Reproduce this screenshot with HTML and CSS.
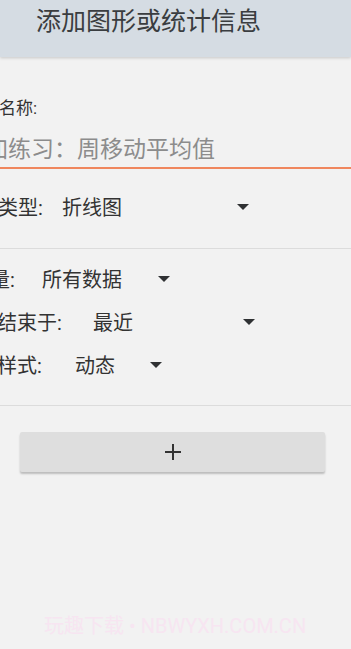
FILE: index.html
```html
<!DOCTYPE html>
<html lang="zh-CN">
<head>
  <meta charset="UTF-8">
  <title>添加图形或统计信息</title>
  <link rel="stylesheet" href="styles.css">
</head>
<body>

  <div class="header">
    <h1 class="title">添加图形或统计信息</h1>
  </div>

  <div class="form">
    <div class="name-label">名称:</div>
    <div class="name-input">
      <span class="placeholder">加练习：周移动平均值</span>
    </div>

    <div class="row row-type">
      <span class="label">类型:</span>
      <div class="spinner">
        <span class="value">折线图</span>
        <span class="arrow"></span>
      </div>
    </div>

    <div class="divider"></div>

    <div class="row row-range">
      <span class="label">数量:</span>
      <div class="spinner">
        <span class="value">所有数据</span>
        <span class="arrow"></span>
      </div>
    </div>

    <div class="row row-end">
      <span class="label">结束于:</span>
      <div class="spinner">
        <span class="value">最近</span>
        <span class="arrow"></span>
      </div>
    </div>

    <div class="row row-style">
      <span class="label">样式:</span>
      <div class="spinner">
        <span class="value">动态</span>
        <span class="arrow"></span>
      </div>
    </div>

    <div class="divider divider-bottom"></div>

    <button class="add-btn" type="button">
      <svg width="18" height="18" viewBox="0 0 18 18">
        <path d="M9 1v16M1 9h16" stroke="#333" stroke-width="2" fill="none"/>
      </svg>
    </button>
  </div>

  <div class="watermark">玩趣下载 • NBWYXH.COM.CN</div>

</body>
</html>
```

FILE: styles.css
```css
html, body {
  height: 100%;
}

body {
  margin: 0;
  position: relative;
  overflow: hidden;
  background-color: #f2f2f2;
  font-family: Roboto, "Noto Sans CJK SC", sans-serif;
  color: #333;
}

.header {
  height: 57px;
  background-color: #d5dce3;
  box-shadow: 0 1px 3px rgba(0,0,0,0.18);
}

.title {
  margin: 0;
  padding-left: 36px;
  font-size: 25px;
  font-weight: normal;
  line-height: 44px;
  color: #3a3d40;
}

.form {
  padding-top: 39px;
}

.name-label {
  margin-left: -1px;
  font-size: 17px;
  line-height: 24px;
}

.name-input {
  margin-top: 15px;
  padding-bottom: 2px;
  border-bottom: 2px solid #f0875e;
  font-size: 23px;
  line-height: 30px;
}

.placeholder {
  display: block;
  margin-left: -15px;
  color: #8c8c8c;
}

.row {
  display: flex;
  align-items: center;
  height: 43px;
  font-size: 20px;
}

.label {
  flex-shrink: 0;
}

.spinner {
  display: flex;
  align-items: center;
}

.arrow {
  margin-left: auto;
  width: 0;
  height: 0;
  border-left: 6px solid transparent;
  border-right: 6px solid transparent;
  border-top: 6px solid #2f3133;
}

.row-type {
  margin-top: 16px;
}

.row-type .label {
  width: 64px;
  margin-left: -2px;
}

.row-type .spinner {
  width: 187px;
}

.row-range {
  margin-top: 8px;
}

.row-range .label {
  width: 72px;
  margin-left: -30px;
}

.row-range .spinner {
  width: 128px;
}

.row-end .label {
  width: 96px;
  margin-left: -3px;
}

.row-end .spinner {
  width: 162px;
}

.row-style .label {
  width: 78px;
  margin-left: -3px;
}

.row-style .spinner {
  width: 87px;
}

.divider {
  height: 1px;
  margin-top: 20px;
  background-color: #dcdcdc;
}

.divider-bottom {
  margin-top: 19px;
}

.add-btn {
  display: flex;
  align-items: center;
  justify-content: center;
  width: 305px;
  height: 40px;
  margin: 26px 0 0 20px;
  padding: 0;
  border: none;
  border-radius: 2px;
  background-color: #dedede;
  box-shadow: 0 2px 2px rgba(0,0,0,0.22);
}

.watermark {
  position: absolute;
  left: 44px;
  top: 613px;
  font-size: 20px;
  line-height: 26px;
  color: #f7e5f1;
  white-space: nowrap;
}
```
